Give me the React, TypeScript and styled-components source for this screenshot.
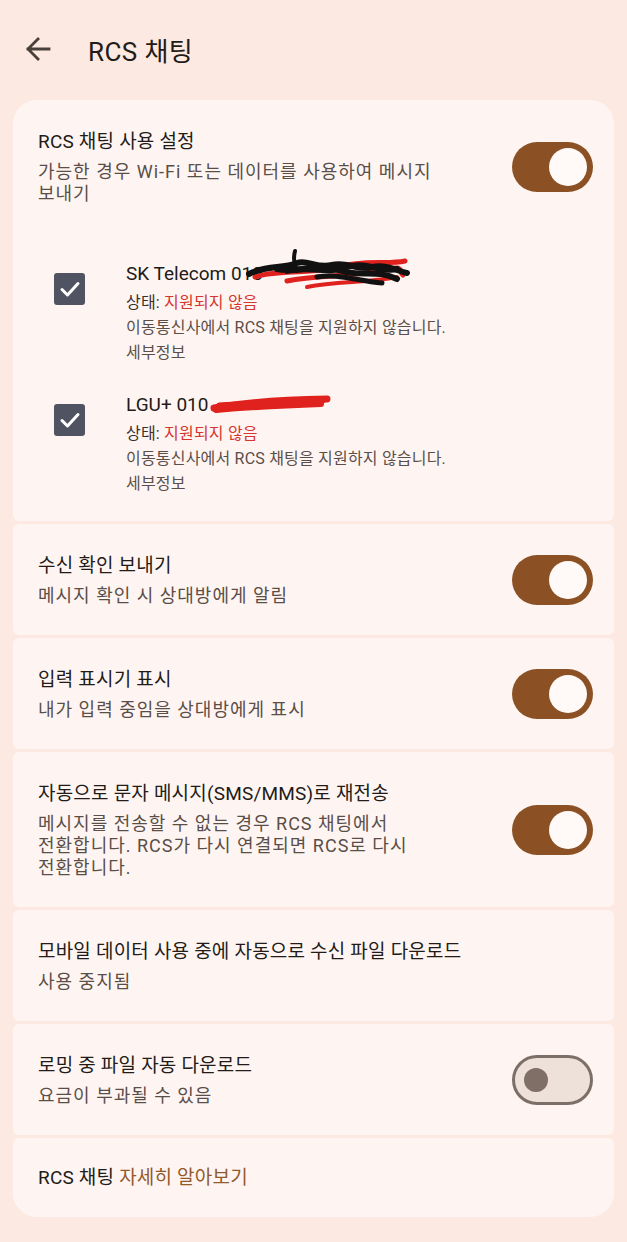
import React from "react";
import styled, { createGlobalStyle } from "styled-components";

const GlobalStyle = createGlobalStyle`
  html, body {
    margin: 0;
    padding: 0;
    background: #fce9e1;
  }
  body {
    font-family: Roboto, "Noto Sans CJK KR", sans-serif;
    -webkit-font-smoothing: antialiased;
  }
  * { box-sizing: border-box; }
`;

const Page = styled.div`
  width: 627px;
  min-height: 1242px;
  background: #fce9e1;
  display: flex;
  flex-direction: column;
`;

const Header = styled.header`
  height: 100px;
  display: flex;
  align-items: center;
  padding: 0 0 2px 25px;
`;

const BackButton = styled.button`
  width: 26px;
  height: 26px;
  padding: 0;
  border: 0;
  background: transparent;
  display: flex;
  align-items: center;
  justify-content: center;
  margin-right: 37px;
  color: #4a403b;
`;

const PageTitle = styled.h1`
  margin: 0;
  font-size: 26px;
  font-weight: 400;
  color: #221b18;
  letter-spacing: 0.4px;
`;

const List = styled.div`
  display: flex;
  flex-direction: column;
  gap: 3px;
  padding: 0 13px;
`;

type Pos = "first" | "middle" | "last";

const Card = styled.section<{ $pos: Pos; $pad?: string }>`
  background: #fef5f2;
  border-radius: ${(p) =>
    p.$pos === "first" ? "24px 24px 6px 6px" : p.$pos === "last" ? "6px 6px 24px 24px" : "6px"};
  padding: ${(p) => p.$pad || "28px 21px 28px 25px"};
`;

const Row = styled.div`
  display: flex;
  align-items: center;
  justify-content: space-between;
  gap: 24px;
`;

const TextBlock = styled.div`
  display: flex;
  flex-direction: column;
  gap: 5px;
`;

const Title = styled.div`
  font-size: 19px;
  line-height: 28px;
  letter-spacing: 0.2px;
  color: #221b18;
`;

const Sub = styled.div`
  font-size: 18px;
  line-height: 22px;
  letter-spacing: 1px;
  color: #5a4e48;
`;

const Link = styled.span`
  color: #93592a;
`;

const Track = styled.div<{ $on: boolean }>`
  flex: none;
  width: 81px;
  height: 50px;
  border-radius: 25px;
  display: flex;
  align-items: center;
  justify-content: ${(p) => (p.$on ? "flex-end" : "flex-start")};
  background: ${(p) => (p.$on ? "#8b5124" : "#ede1da")};
  border: ${(p) => (p.$on ? "none" : "3px solid #7d6f68")};
  padding: ${(p) => (p.$on ? "0 6px" : "0 9px")};
`;

const Thumb = styled.div<{ $on: boolean }>`
  width: ${(p) => (p.$on ? 38 : 24)}px;
  height: ${(p) => (p.$on ? 38 : 24)}px;
  border-radius: 50%;
  background: ${(p) => (p.$on ? "#fffaf8" : "#806f66")};
`;

const Toggle = ({ on }: { on: boolean }) => (
  <Track $on={on}>
    <Thumb $on={on} />
  </Track>
);

const SimList = styled.div`
  display: flex;
  flex-direction: column;
  gap: 26px;
  margin-top: 55px;
`;

const SimItem = styled.div`
  display: flex;
  align-items: flex-start;
  padding-left: 16px;
  gap: 41px;
`;

const CheckBox = styled.div`
  flex: none;
  width: 31px;
  height: 32px;
  margin-top: 13px;
  border-radius: 3px;
  background: #505462;
  display: flex;
  align-items: center;
  justify-content: center;
`;

const SimText = styled.div`
  display: flex;
  flex-direction: column;
`;

const SimTitle = styled.div`
  display: flex;
  font-size: 19px;
  line-height: 28px;
  color: #221b18;
  margin-bottom: 2px;
`;

const Redaction = styled.span`
  position: relative;
  width: 0;
`;

const SimLine = styled.div`
  font-size: 16px;
  line-height: 25px;
  letter-spacing: 0.2px;
  color: #5a4e48;
`;

const StatusLabel = styled.span`
  color: #3b302b;
`;

const StatusValue = styled.span`
  color: #d6342c;
`;

const Scribble = styled.svg<{ $left: number; $top: number }>`
  position: absolute;
  left: ${(p) => p.$left}px;
  top: ${(p) => p.$top}px;
  overflow: visible;
  pointer-events: none;
`;

const Check = () => (
  <svg width="22" height="18" viewBox="0 0 22 18">
    <polyline points="3,9.5 8.5,15 19,3.5" fill="none" stroke="#ffffff" strokeWidth="3" strokeLinecap="round" strokeLinejoin="round" />
  </svg>
);

const SkScribble = () => (
  <Scribble $left={-16} $top={-13} width="165" height="46" viewBox="0 0 165 46">
    <path d="M8 30 C30 22, 60 28, 90 20 S140 18, 158 14" stroke="#e0221f" strokeWidth="5" fill="none" strokeLinecap="round" />
    <path d="M40 34 C70 28, 100 30, 130 24 S150 22, 156 28" stroke="#e0221f" strokeWidth="5" fill="none" strokeLinecap="round" />
    <path d="M60 40 C90 34, 120 36, 150 30" stroke="#e0221f" strokeWidth="4" fill="none" strokeLinecap="round" />
    <path d="M2 27 C20 18, 35 22, 50 16 C60 12, 70 22, 85 18 C100 14, 110 24, 125 20 C140 17, 150 24, 160 26" stroke="#111111" strokeWidth="6" fill="none" strokeLinecap="round" />
    <path d="M30 22 C50 26, 70 16, 95 24 C115 30, 130 22, 150 32" stroke="#111111" strokeWidth="6" fill="none" strokeLinecap="round" />
    <path d="M40 24 C60 18, 80 28, 100 20 C120 14, 135 26, 150 22" stroke="#111111" strokeWidth="6" fill="none" strokeLinecap="round" />
    <path d="M48 4 C46 12, 47 18, 50 24" stroke="#111111" strokeWidth="4" fill="none" strokeLinecap="round" />
    <path d="M70 30 C90 26, 110 34, 135 36" stroke="#111111" strokeWidth="5" fill="none" strokeLinecap="round" />
  </Scribble>
);

const LgScribble = () => (
  <Scribble $left={3} $top={3} width="120" height="22" viewBox="0 0 120 22">
    <path d="M3 14 C30 9, 60 6, 116 5" stroke="#e0221f" strokeWidth="7" fill="none" strokeLinecap="round" />
    <path d="M5 16 C40 13, 80 11, 110 10" stroke="#e0221f" strokeWidth="6" fill="none" strokeLinecap="round" />
    <path d="M8 11 C40 9, 80 8, 112 7" stroke="#e0221f" strokeWidth="5" fill="none" strokeLinecap="round" />
  </Scribble>
);

type Sim = { name: string; scribble: React.ReactNode };

const sims: Sim[] = [
  { name: "SK Telecom 010", scribble: <SkScribble /> },
  { name: "LGU+ 010", scribble: <LgScribble /> },
];

type Setting = { title: string; sub: string[]; toggle?: boolean };

const settings: Setting[] = [
  { title: "수신 확인 보내기", sub: ["메시지 확인 시 상대방에게 알림"], toggle: true },
  { title: "입력 표시기 표시", sub: ["내가 입력 중임을 상대방에게 표시"], toggle: true },
  {
    title: "자동으로 문자 메시지(SMS/MMS)로 재전송",
    sub: ["메시지를 전송할 수 없는 경우 RCS 채팅에서", "전환합니다. RCS가 다시 연결되면 RCS로 다시", "전환합니다."],
    toggle: true,
  },
  { title: "모바일 데이터 사용 중에 자동으로 수신 파일 다운로드", sub: ["사용 중지됨"] },
  { title: "로밍 중 파일 자동 다운로드", sub: ["요금이 부과될 수 있음"], toggle: false },
];

export default function App() {
  return (
    <Page>
      <GlobalStyle />
      <Header>
        <BackButton aria-label="뒤로">
          <svg width="26" height="26" viewBox="0 0 26 26">
            <path d="M24 13 H3 M13 3 L3 13 L13 23" fill="none" stroke="currentColor" strokeWidth="2.8" strokeLinecap="square" strokeLinejoin="miter" />
          </svg>
        </BackButton>
        <PageTitle>RCS 채팅</PageTitle>
      </Header>
      <List>
        <Card $pos="first" $pad="28px 21px 25px 25px">
          <Row>
            <TextBlock>
              <Title>RCS 채팅 사용 설정</Title>
              <Sub>
                가능한 경우 Wi-Fi 또는 데이터를 사용하여 메시지
                <br />
                보내기
              </Sub>
            </TextBlock>
            <Toggle on />
          </Row>
          <SimList>
            {sims.map((s) => (
              <SimItem key={s.name}>
                <CheckBox>
                  <Check />
                </CheckBox>
                <SimText>
                  <SimTitle>
                    {s.name}
                    <Redaction>{s.scribble}</Redaction>
                  </SimTitle>
                  <SimLine>
                    <StatusLabel>상태: </StatusLabel>
                    <StatusValue>지원되지 않음</StatusValue>
                  </SimLine>
                  <SimLine>이동통신사에서 RCS 채팅을 지원하지 않습니다.</SimLine>
                  <SimLine>세부정보</SimLine>
                </SimText>
              </SimItem>
            ))}
          </SimList>
        </Card>
        {settings.map((s) => (
          <Card key={s.title} $pos="middle">
            <Row>
              <TextBlock>
                <Title>{s.title}</Title>
                <Sub>
                  {s.sub.map((l, i) => (
                    <React.Fragment key={i}>
                      {i > 0 && <br />}
                      {l}
                    </React.Fragment>
                  ))}
                </Sub>
              </TextBlock>
              {s.toggle !== undefined && <Toggle on={s.toggle} />}
            </Row>
          </Card>
        ))}
        <Card $pos="last" $pad="26px 21px 25px 25px">
          <Title>
            RCS 채팅 <Link>자세히 알아보기</Link>
          </Title>
        </Card>
      </List>
    </Page>
  );
}
